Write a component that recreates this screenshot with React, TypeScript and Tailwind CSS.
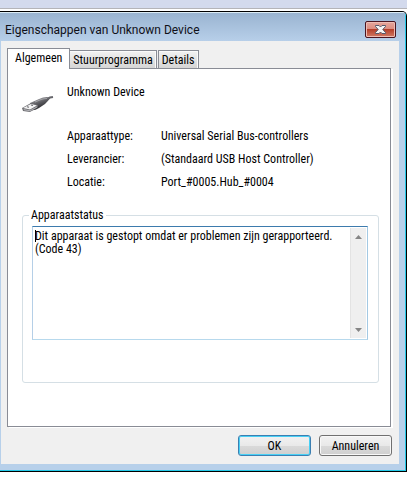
import React, { useState } from 'react';

const tabs = ['Algemeen', 'Stuurprogramma', 'Details'];

const properties = [
  { label: 'Apparaattype:', value: 'Universal Serial Bus-controllers' },
  { label: 'Leverancier:', value: '(Standaard USB Host Controller)' },
  { label: 'Locatie:', value: 'Port_#0005.Hub_#0004' },
];

const statusText =
  'Dit apparaat is gestopt omdat er problemen zijn gerapporteerd. (Code 43)';

function UsbPlugIcon() {
  return (
    <svg className="h-5 w-8" viewBox="0 0 32 20" fill="none" aria-hidden="true">
      <defs>
        <linearGradient id="plug" x1="15" y1="3" x2="19" y2="14" gradientUnits="userSpaceOnUse">
          <stop stopColor="#9a9a9e" />
          <stop offset="0.45" stopColor="#5c5c61" />
          <stop offset="1" stopColor="#26262a" />
        </linearGradient>
      </defs>
      <path d="M25 4 L28 2.500 L31 2" stroke="#66666b" strokeWidth="2" />
      <path d="M8 8 L17 4 Q21 2 25 2 L28 3.500 Q26 6 23 9 L17 13 Q12 16 9 15 Z" fill="url(#plug)" />
      <path d="M13 7 L19 4.500 Q22 3.500 25 3.500" stroke="#b0b0b4" strokeWidth="0.8" />
      <path d="M0 13 L9 8 L16 10 L16 12 L8 17 L1 16 Z" fill="#6c6c70" />
      <path d="M1 13 L9 9 L15 10.500 L8 14.500 Z" fill="#f4f4f5" />
      <path d="M1.500 14 L8 15.300 L15 11.500 L15 12.500 L8 16.300 L2 15.300 Z" fill="#b4b4b8" />
      <path d="M5 11.800 L7 12.300 M9 10 L11 10.500" stroke="#66666a" strokeWidth="1.100" />
    </svg>
  );
}

function CloseIcon() {
  return (
    <svg className="h-[9px] w-[11px]" viewBox="0 0 11 9" aria-hidden="true">
      <path
        d="M0.500 0.500 H4 L5.500 2 L7 0.500 H10.500 V1.500 L7.800 4.500 L10.500 7.500 V8.500 H7 L5.500 7 L4 8.500 H0.500 V7.500 L3.200 4.500 L0.500 1.500 Z"
        fill="#f5f5f5"
        stroke="#545a6c"
      />
    </svg>
  );
}

function TitleBar() {
  return (
    <header className="flex h-7 items-center justify-between bg-linear-to-b from-[#9ab4d1] to-[#b7cfe9] pr-[9px] pl-[5px]">
      <h1 className="pt-[6px] font-[Roboto,sans-serif] text-[12px] leading-4 whitespace-nowrap text-[#101018]">
        Eigenschappen van Unknown Device
      </h1>
      <button
        type="button"
        aria-label="Sluiten"
        className="mt-[4px] flex h-[17px] w-[31px] items-center justify-center rounded-[2px] border border-[#4a1520] bg-[linear-gradient(#e5a69c_0%,#dc8d80_48%,#b5402b_50%,#d07a65_100%)] shadow-[inset_0_0_0_1px_#eebdb5]"
      >
        <CloseIcon />
      </button>
    </header>
  );
}

function TabStrip({ active, onSelect }: { active: string; onSelect: (tab: string) => void }) {
  return (
    <div role="tablist" className="flex h-5 items-end">
      {tabs.map((tab) => (
        <button
          key={tab}
          type="button"
          role="tab"
          aria-selected={tab === active}
          onClick={() => onSelect(tab)}
          className={
            tab === active
              ? 'relative z-10 -mb-px h-[21px] border border-b-0 border-[#898c95] bg-white px-[7px] pb-[2px]'
              : 'mr-px h-[18px] border border-b-0 border-l-0 border-[#898c95] bg-linear-to-b from-[#f2f2f2] to-[#d5d5d5] px-[3px] shadow-[inset_-1px_1px_0_#fafafa] last:border-l'
          }
        >
          {tab}
        </button>
      ))}
    </div>
  );
}

function StatusBox() {
  return (
    <div className="relative flex h-[114px] border border-t-[#3d7bad] border-r-[#a4c9e3] border-b-[#b7d9ed] border-l-[#b5cfe7] bg-white p-px">
      <textarea
        readOnly
        aria-labelledby="status-label"
        value={statusText}
        className="min-w-0 flex-1 resize-none overflow-hidden px-px pt-[2px] leading-[13px] outline-none"
      />
      <span className="absolute top-[3px] left-[2px] h-[12px] w-px bg-black" />
      <div className="flex w-4 flex-col justify-between border-l border-[#e3e3e3] bg-[#efefef]">
        <button type="button" aria-label="Omhoog" className="flex h-[17px] items-center justify-center">
          <svg className="h-1 w-[7px]" viewBox="0 0 7 4" aria-hidden="true">
            <path d="M0 4 L3.500 0 L7 4 Z" fill="#858585" />
          </svg>
        </button>
        <button type="button" aria-label="Omlaag" className="flex h-[17px] items-center justify-center">
          <svg className="h-1 w-[7px]" viewBox="0 0 7 4" aria-hidden="true">
            <path d="M0 0 H7 L3.500 4 Z" fill="#858585" />
          </svg>
        </button>
      </div>
    </div>
  );
}

function GeneralPanel() {
  return (
    <div
      role="tabpanel"
      className="border border-[#898c95] bg-white pr-[11px] pb-[43px] pl-[14px] shadow-[2px_1px_0_#fff]"
    >
      <div className="flex items-start gap-[13px] pt-4">
        <div className="pt-[10px]">
          <UsbPlugIcon />
        </div>
        <div>
          <h2>Unknown Device</h2>
          <dl className="mt-[30px] grid grid-cols-[94px_auto] gap-y-[9px]">
            {properties.map(({ label, value }) => (
              <React.Fragment key={label}>
                <dt>{label}</dt>
                <dd>{value}</dd>
              </React.Fragment>
            ))}
          </dl>
        </div>
      </div>
      <fieldset className="mt-[19px] min-w-0 rounded-[3px] border border-[#d5dfe5] pr-[10px] pb-[42px] pl-[9px]">
        <legend id="status-label" className="-ml-[3px] px-[2px]">
          Apparaatstatus
        </legend>
        <div className="pt-[4px]">
          <StatusBox />
        </div>
      </fieldset>
    </div>
  );
}

const pushButton =
  'h-[21px] w-[73px] rounded-[3px] border bg-[linear-gradient(#f2f2f2,#e9e9e9_50%,#dadada_50%,#cfcfcf)]';

export default function App() {
  const [active, setActive] = useState('Algemeen');

  return (
    <div className="bg-white pb-[7px] font-['Roboto_Condensed',Roboto,sans-serif] text-[12px] leading-[14px] text-black">
      <div className="h-[11px] border-b-2 border-white bg-[#d3daed]">
        <div className="h-[9px] border-b border-[#b4b4b8]" />
      </div>
      <div className="rounded-tr-[5px] border-t border-r border-b border-black bg-[#b7d0ea]">
        <main className="rounded-tr-[4px] border-t border-r border-b border-t-[#dcecf5] border-r-[#24c9e8] border-b-[#24c9e8] pb-[6px]">
          <TitleBar />
          <div className="mr-[6px] ml-px bg-[#f0f0f0] px-[6px] pt-[7px] pb-2">
            <TabStrip active={active} onSelect={setActive} />
            <div className="mr-[2px]">
              <GeneralPanel />
            </div>
            <footer className="mt-2 mr-px flex justify-end gap-2">
              <button
                type="button"
                className={`${pushButton} border-[#3c7fb1] shadow-[inset_0_0_0_1px_#48d0f5]`}
              >
                OK
              </button>
              <button
                type="button"
                className={`${pushButton} border-[#707070] shadow-[inset_0_0_0_1px_#f8f8f8]`}
              >
                Annuleren
              </button>
            </footer>
          </div>
        </main>
      </div>
    </div>
  );
}
